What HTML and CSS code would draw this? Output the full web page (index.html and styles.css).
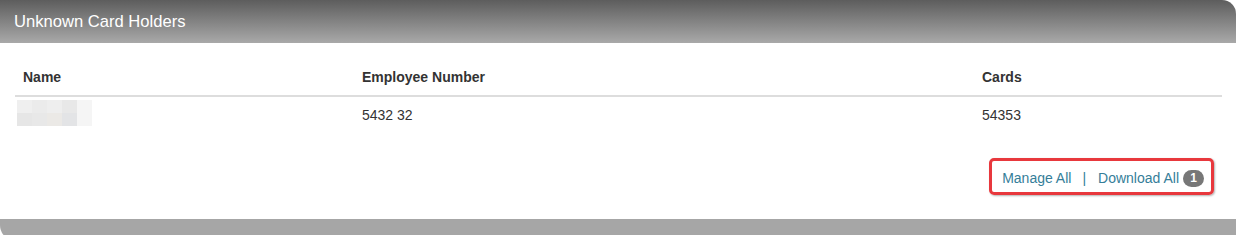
FILE: index.html
```html
<!DOCTYPE html>
<html>
<head>
<meta charset="utf-8">
<title>Unknown Card Holders</title>
<link rel="stylesheet" href="styles.css">
</head>
<body>
<div class="panel">
  <div class="panel-header">Unknown Card Holders</div>
  <div class="panel-body">
    <table class="grid">
      <colgroup>
        <col class="c-name">
        <col class="c-emp">
        <col class="c-cards">
      </colgroup>
      <thead>
        <tr><th>Name</th><th>Employee Number</th><th>Cards</th></tr>
      </thead>
      <tbody>
        <tr>
          <td>
            <div class="blurred">
              <span class="b1"></span><span class="b2"></span><span class="b3"></span><span class="b4"></span><span class="b5"></span>
              <span class="b6"></span><span class="b7"></span><span class="b8"></span><span class="b9"></span><span class="b10"></span>
            </div>
          </td>
          <td>5432 32</td>
          <td>54353</td>
        </tr>
      </tbody>
    </table>
    <div class="actions">
      <div class="highlight">
        <a class="link" href="#">Manage All</a><span class="sep">|</span><a class="link" href="#">Download All</a><span class="badge">1</span>
      </div>
    </div>
  </div>
  <div class="panel-footer"></div>
</div>
</body>
</html>
```
FILE: styles.css
```css
html, body {
  margin: 0;
  padding: 0;
  height: 235px;
  overflow: hidden;
  background: #ffffff;
  font-family: "Liberation Sans", Arial, sans-serif;
}

.panel {
  width: 1236px;
}

.panel-header {
  height: 43px;
  box-sizing: border-box;
  padding: 1px 0 0 14px;
  line-height: 42px;
  font-size: 16.6px;
  color: #ffffff;
  background: linear-gradient(to bottom, #5d5d5d 0%, #a9a9a9 100%);
  border-top-right-radius: 14px;
}

.panel-body {
  padding: 16px 14px 0 15px;
  height: 176px;
  box-sizing: border-box;
}

.grid {
  width: 1207px;
  table-layout: fixed;
  border-collapse: collapse;
  font-size: 14px;
  line-height: 20px;
  color: #333333;
}

.c-name { width: 339px; }
.c-emp { width: 620px; }
.c-cards { width: 248px; }

.grid th {
  text-align: left;
  font-weight: bold;
  padding: 8px 8px;
  border-bottom: 2px solid #dddddd;
}

.grid td {
  padding: 8px 8px;
  vertical-align: middle;
}

.blurred {
  display: grid;
  grid-template-columns: repeat(5, 15px);
  grid-template-rows: 13px 13px;
  margin: -5px 0 -1px -6px;
  width: 75px;
}
.b1 { background: #efefef; }
.b2 { background: #ebebeb; }
.b3 { background: #eeeeee; }
.b4 { background: #e8e8e8; }
.b5 { background: #f5f5f5; }
.b6 { background: #e6e6e6; }
.b7 { background: #e8e8e8; }
.b8 { background: #ebe9e6; }
.b9 { background: #e3e4e6; }
.b10 { background: #f5f5f5; }

.actions {
  display: flex;
  justify-content: flex-end;
  padding-right: 8px;
  margin-top: 25px;
}

.highlight {
  display: flex;
  align-items: center;
  border: 3px solid #e8383d;
  border-radius: 5px;
  padding: 7px 7px 4px 10px;
  font-size: 14px;
  line-height: 20px;
  box-shadow: 1px 1px 2px rgba(0, 0, 0, 0.3);
}

.link {
  color: #357e99;
  text-decoration: none;
}

.sep {
  color: #357e99;
  margin: 0 12px 0 11px;
}

.badge {
  display: inline-block;
  margin-left: 4px;
  width: 21px;
  height: 17px;
  line-height: 17px;
  border-radius: 9px;
  background: #777777;
  color: #ffffff;
  font-size: 12px;
  font-weight: bold;
  text-align: center;
}

.panel-footer {
  height: 22px;
  background: #a6a6a6;
  border-bottom-left-radius: 16px;
}
```
